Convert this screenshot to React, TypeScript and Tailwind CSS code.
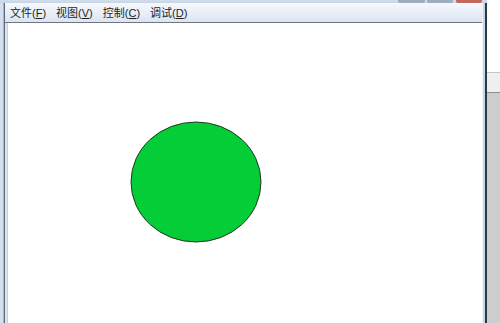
const menus = [
  { label: "文件", key: "F" },
  { label: "视图", key: "V" },
  { label: "控制", key: "C" },
  { label: "调试", key: "D" },
];

function MenuItem({ label, hotkey }: { label: string; hotkey: string }) {
  return (
    <span className="text-[11px] leading-none text-[#1e1e1e] whitespace-nowrap">
      {label}(<span className="underline underline-offset-1">{hotkey}</span>)
    </span>
  );
}

export default function App() {
  return (
    <div
      className="w-[500px] h-[323px] overflow-hidden bg-white flex"
      style={{ fontFamily: '"Liberation Sans", "Noto Sans CJK SC", sans-serif' }}
    >
      {/* window */}
      <div className="w-[487px] h-full flex flex-col bg-[#cbd8e8]">
        {/* title bar bottom edge with caption buttons */}
        <div className="h-[3px] flex justify-end gap-[2px] pr-[5px] bg-gradient-to-b from-[#d2deec] to-[#c6d4e6]">
          <div className="w-[27px] bg-[#9eacbf] rounded-b-[2px]" />
          <div className="w-[26px] mr-[1px] bg-[#9eacbf] rounded-b-[2px]" />
          <div className="w-[26px] bg-[#c0665c] rounded-b-[2px]" />
        </div>
        <div className="flex-1 flex min-h-0">
          {/* left frame */}
          <div className="w-[7px] flex">
            <div className="w-[3px] bg-[#d3dfed]" />
            <div className="w-[1px] bg-[#a7b6c9]" />
            <div className="w-[1px] bg-[#5d6b7d]" />
            <div className="w-[2px] bg-[#dbe6f2]" />
          </div>
          {/* inner */}
          <div className="flex-1 flex flex-col -ml-[2px]">
            <div className="h-[19px] flex items-center gap-[10px] pl-[5px] pt-[1px] bg-gradient-to-b from-[#f5f8fc] via-[#e9eff8] to-[#dbe4f1]">
              {menus.map((m) => (
                <MenuItem key={m.key} label={m.label} hotkey={m.key} />
              ))}
            </div>
            <div className="h-[1px] bg-[#6f7680]" />
            <div className="flex-1 flex">
              <div className="w-[2px] bg-[#dbe6f2]" />
              <div className="flex-1 relative bg-white border-l border-[#c9ced6]">
                <svg
                  className="absolute left-[121px] top-[98px]"
                  width="134"
                  height="124"
                  viewBox="0 0 134 124"
                >
                  <ellipse
                    cx="67"
                    cy="61"
                    rx="65"
                    ry="60"
                    fill="#05cd38"
                    stroke="#1f3b22"
                    strokeWidth="1"
                  />
                </svg>
              </div>
            </div>
          </div>
          {/* right frame */}
          <div className="w-[5px] flex">
            <div className="w-[1px] bg-[#eef3f9]" />
            <div className="w-[2px] bg-[#c6d6e8]" />
            <div className="w-[2px] bg-[#2c3a48]" />
          </div>
        </div>
      </div>
      {/* background window behind */}
      <div className="flex-1 flex flex-col">
        <div className="h-[72px] bg-white" />
        <div className="h-[1px] bg-[#c4c4c4]" />
        <div className="h-[19px] bg-[#efefef]" />
        <div className="h-[1px] bg-[#8e8e8e]" />
        <div className="flex-1 bg-[#cdcdcd]" />
      </div>
    </div>
  );
}
